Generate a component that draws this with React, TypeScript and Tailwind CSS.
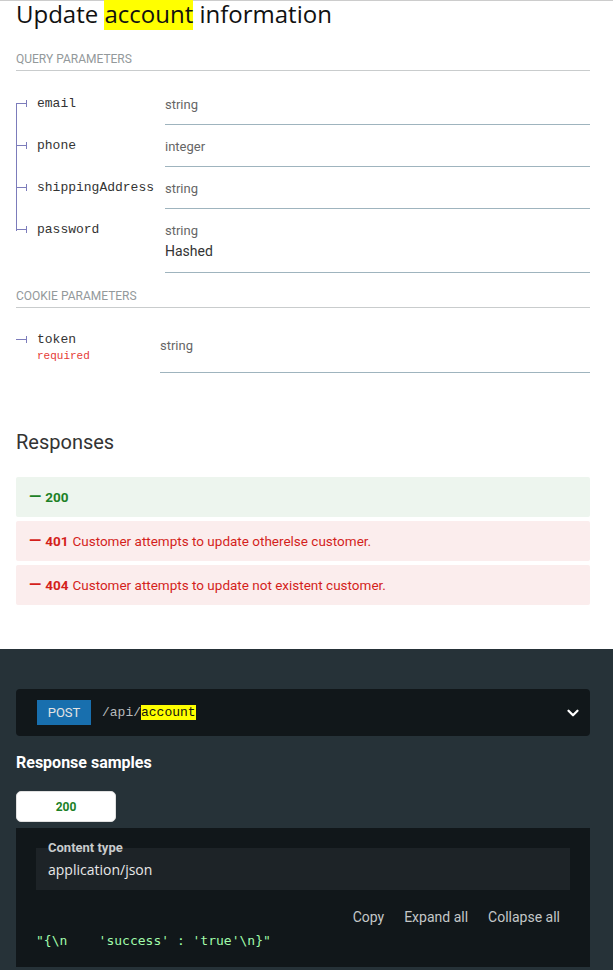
import { ChevronDown } from "lucide-react";

type Param = {
  name: string;
  type: string;
  note?: string;
};

const queryParams: Param[] = [
  { name: "email", type: "string" },
  { name: "phone", type: "integer" },
  { name: "shippingAddress", type: "string" },
  { name: "password", type: "string", note: "Hashed" },
];

const responses = [
  { code: "200", text: "", ok: true },
  { code: "401", text: "Customer attempts to update otherelse customer.", ok: false },
  { code: "404", text: "Customer attempts to update not existent customer.", ok: false },
];

function Bullet() {
  return (
    <span className="mr-[10px] inline-flex items-center align-middle">
      <span className="inline-block h-px w-[10px] bg-[#7c7cbb]" />
      <span className="inline-block h-[7px] w-px bg-[#7c7cbb]" />
    </span>
  );
}

function treeLine(i: number, count: number) {
  if (i === 0) {
    return "bg-[linear-gradient(to_bottom,transparent_21px,#7c7cbb_21px)] bg-no-repeat bg-[length:1px_100%]";
  }
  if (i === count - 1) {
    return "bg-[linear-gradient(to_bottom,#7c7cbb_22px,transparent_22px)] bg-no-repeat bg-[length:1px_100%]";
  }
  return "bg-[linear-gradient(#7c7cbb,#7c7cbb)] bg-no-repeat bg-[length:1px_100%]";
}

function SectionLabel({ children }: { children: string }) {
  return (
    <h5 className="border-b border-[#c9cccd] pb-[3px] text-[12px] leading-4 font-normal uppercase text-[#93999b]">
      {children}
    </h5>
  );
}

export default function App() {
  return (
    <div className="w-[613px] font-['Roboto',sans-serif]">
      <div className="border-t border-[#cccccc] bg-white pr-[23px] pb-[44px] pl-4">
        <h2 className="font-['Open_Sans',sans-serif] text-[24px] leading-[26px] font-normal text-[#111]">
          Update <span className="bg-[#ffff00]">account</span> information
        </h2>

        <div className="mt-[24px]">
          <SectionLabel>Query Parameters</SectionLabel>
          <div className="mt-[12px]">
            {queryParams.map((p, i) => (
              <div key={p.name} className="flex items-stretch">
                <div
                  className={`w-[149px] shrink-0 pt-[11px] font-['Liberation_Mono',monospace] text-[13px] leading-5 text-[#333] ${treeLine(i, queryParams.length)}`}
                >
                  <Bullet />
                  {p.name}
                </div>
                <div
                  className={`flex-1 border-b border-[#9fb4be] pt-[12px] ${p.note ? "pb-[11px]" : "pb-[9px]"}`}
                >
                  <div className="text-[13px] leading-5 text-[#666]">{p.type}</div>
                  {p.note && <div className="text-[14px] leading-5 text-[#333]">{p.note}</div>}
                </div>
              </div>
            ))}
          </div>
        </div>

        <div className="mt-[15px]">
          <SectionLabel>Cookie Parameters</SectionLabel>
          <div className="mt-[12px] flex items-stretch">
            <div className="w-[144px] shrink-0 py-[10px] font-['Liberation_Mono',monospace] text-[#333]">
              <div className="text-[13px] leading-5">
                <Bullet />
                token
              </div>
              <div className="pl-[21px] text-[11px] leading-[13px] text-[#e53935]">required</div>
            </div>
            <div className="flex flex-1 items-center border-b border-[#9fb4be] text-[13px] leading-5 text-[#666]">
              string
            </div>
          </div>
        </div>

        <h3 className="mt-[55px] text-[20px] leading-[28px] font-normal text-[#333]">Responses</h3>

        <div className="mt-[21px] flex flex-col gap-[4px]">
          {responses.map((r) => (
            <div
              key={r.code}
              className={`flex h-[40px] items-center rounded-[2px] px-[13px] text-[13.5px] ${
                r.ok ? "bg-[#edf5ee] text-[#1d8127]" : "bg-[#fbeded] text-[#d41f1c]"
              }`}
            >
              <span className="mr-[4px] text-[16px] font-bold">—</span>
              <strong className="font-bold">{r.code}</strong>
              {r.text && <span className="ml-[4px]">{r.text}</span>}
            </div>
          ))}
        </div>
      </div>

      <div className="bg-[#263238] pt-[40px] pr-[23px] pb-6 pl-4">
        <div className="flex h-[47px] items-center rounded-[4px] bg-[#11171a] pr-[8px] pl-[21px]">
          <span className="flex h-[25px] w-[54px] items-center justify-center bg-[#186fae] text-[13px] uppercase text-[#e3e3e3]">
            POST
          </span>
          <span className="ml-[11px] font-['Liberation_Mono',monospace] text-[13px] text-[#b7bbbd]">
            /api/<span className="bg-[#ffff00] text-[#111]">account</span>
          </span>
          <ChevronDown className="ml-auto h-[18px] w-[18px] text-white" strokeWidth={3} />
        </div>

        <h3 className="mt-[17px] text-[16px] leading-5 font-bold text-white">Response samples</h3>

        <div className="mt-[18px] flex h-[31px] w-[100px] items-center justify-center rounded-[5px] border border-[#e0e0e0] bg-white text-[12px] font-bold text-[#1d8127]">
          200
        </div>

        <div className="mt-[6px] bg-[#11171a] px-5 pt-[20px] pb-[16px]">
          <div className="relative h-[42px] bg-[#1d2327] pl-[12px]">
            <div className="absolute top-[-8px] left-[12px] text-[13px] leading-4 font-bold text-[#c8cbcc]">
              Content type
            </div>
            <div className="pt-[12px] font-['Open_Sans',sans-serif] text-[14px] leading-5 text-[#e8e8e8]">
              application/json
            </div>
          </div>

          <div className="mt-[17px] flex justify-end text-[14px] leading-5 text-[#c4c7c8]">
            <span className="px-[10px]">Copy</span>
            <span className="px-[10px]">Expand all</span>
            <span className="px-[10px]">Collapse all</span>
          </div>

          <pre className="mt-[4px] font-['DejaVu_Sans_Mono',monospace] text-[13px] leading-5 whitespace-pre text-[#a0fbaa]">
            {`"{\\n    'success' : 'true'\\n}"`}
          </pre>
        </div>
      </div>
    </div>
  );
}
